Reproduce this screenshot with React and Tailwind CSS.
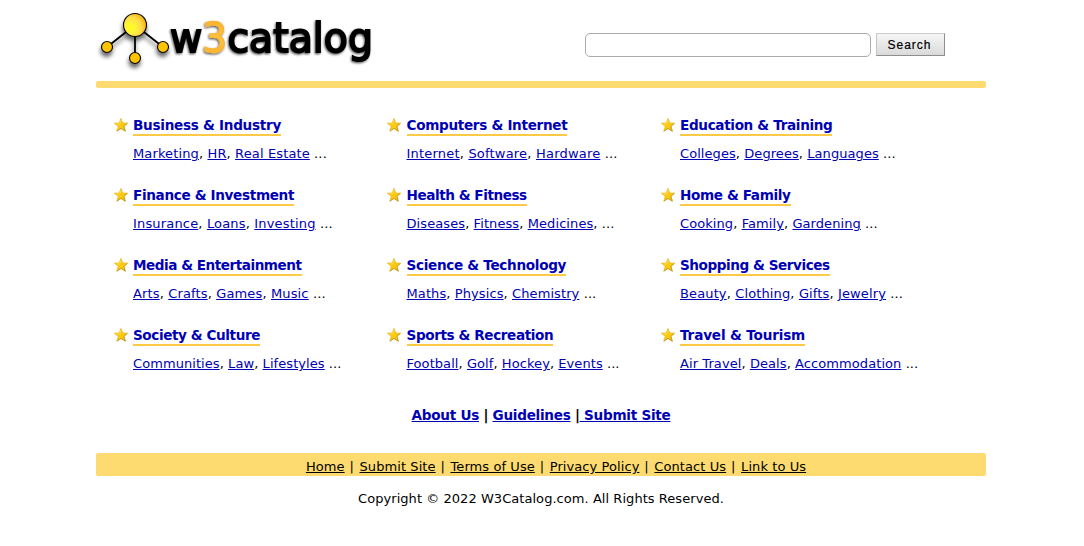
const categories = [
  { title: 'Business & Industry', links: ['Marketing', 'HR', 'Real Estate'], titleFit: 'tracking-[-0.29px]', linksFit: 'tracking-[0.13px]' },
  { title: 'Computers & Internet', links: ['Internet', 'Software', 'Hardware'], titleFit: 'tracking-[-0.32px]', linksFit: 'tracking-[0.2px]' },
  { title: 'Education & Training', links: ['Colleges', 'Degrees', 'Languages'], titleFit: 'tracking-[-0.35px]', linksFit: 'tracking-[0.07px]' },
  { title: 'Finance & Investment', links: ['Insurance', 'Loans', 'Investing'], titleFit: 'tracking-[-0.35px]', linksFit: 'tracking-[0.17px]' },
  { title: 'Health & Fitness', links: ['Diseases', 'Fitness', 'Medicines'], trailingComma: true, titleFit: 'tracking-[-0.45px]', linksFit: 'tracking-[0.09px]' },
  { title: 'Home & Family', links: ['Cooking', 'Family', 'Gardening'], titleFit: 'tracking-[-0.38px]', linksFit: 'tracking-[0.08px]' },
  { title: 'Media & Entertainment', links: ['Arts', 'Crafts', 'Games', 'Music'], titleFit: 'tracking-[-0.48px]', linksFit: 'tracking-[0.14px]' },
  { title: 'Science & Technology', links: ['Maths', 'Physics', 'Chemistry'], titleFit: 'tracking-[-0.32px]', linksFit: 'tracking-[0.1px]' },
  { title: 'Shopping & Services', links: ['Beauty', 'Clothing', 'Gifts', 'Jewelry'], titleFit: 'tracking-[-0.45px]', linksFit: 'tracking-[0.13px]' },
  { title: 'Society & Culture', links: ['Communities', 'Law', 'Lifestyles'], titleFit: 'tracking-[-0.42px]', linksFit: 'tracking-[0.07px]' },
  { title: 'Sports & Recreation', links: ['Football', 'Golf', 'Hockey', 'Events'], titleFit: 'tracking-[-0.41px]', linksFit: 'tracking-[0.07px]' },
  { title: 'Travel & Tourism', links: ['Air Travel', 'Deals', 'Accommodation'], titleFit: 'tracking-[-0.17px]', linksFit: 'tracking-[0.08px]' },
];

const footerLinks = ['Home', 'Submit Site', 'Terms of Use', 'Privacy Policy', 'Contact Us', 'Link to Us'];

function Logo() {
  return (
    <svg width="284" height="74" viewBox="0 0 284 74" role="img" aria-label="w3catalog">
      <defs>
        <radialGradient id="hub" cx="30%" cy="62%" r="75%">
          <stop offset="0" stopColor="#ffff20" />
          <stop offset="0.35" stopColor="#fff03c" />
          <stop offset="0.65" stopColor="#ffd94a" />
          <stop offset="1" stopColor="#f5a500" />
        </radialGradient>
        <linearGradient id="three" x1="0" y1="0" x2="0" y2="1">
          <stop offset="0" stopColor="#f6a92c" />
          <stop offset="0.5" stopColor="#ffc83f" />
          <stop offset="1" stopColor="#f3a72f" />
        </linearGradient>
        <filter id="shade" x="-20%" y="-20%" width="140%" height="160%">
          <feDropShadow dx="-0.5" dy="4" stdDeviation="2" floodColor="#000" floodOpacity="0.6" />
        </filter>
        <filter id="letterShade" x="-10%" y="-20%" width="120%" height="150%">
          <feDropShadow dx="-0.8" dy="1.2" stdDeviation="1" floodColor="#000" floodOpacity="0.7" />
        </filter>
      </defs>
      <g filter="url(#shade)" stroke="#000" strokeWidth="1.1">
        <path d="M39 25 11 47M39 25v33M39 25l28 22" strokeWidth="1.8" />
        <circle cx="39" cy="25" r="11.5" fill="url(#hub)" />
        <circle cx="11" cy="47" r="5.5" fill="#ffc400" />
        <circle cx="39" cy="58" r="5.5" fill="#ffc400" />
        <circle cx="67" cy="47" r="5.5" fill="#ffc400" />
      </g>
      <text
        x="74"
        y="52"
        fontSize="41"
        textLength="203"
        lengthAdjust="spacingAndGlyphs"
        filter="url(#letterShade)"
        fill="#050505"
        stroke="#050505"
        strokeWidth="1.9"
        className="font-['DejaVu_Sans',sans-serif]"
      >
        w<tspan fill="url(#three)" stroke="#f9b535" strokeWidth="1.5">3</tspan>catalog
      </text>
    </svg>
  );
}

function Star() {
  return (
    <svg className="mt-[9px] -ml-[0.5px] shrink-0" width="16" height="16" viewBox="0 0 16 16" aria-hidden="true">
      <path
        d="M8 1.4 9.8 6 14.7 6.2 10.9 9.3 12.3 14.2 8 11.4 3.8 14.2 5.2 9.3 1.3 6.2 6.2 6Z"
        fill="#fbc90d"
        stroke="#e9b51d"
        strokeWidth="0.7"
      />
      <path d="M8 3.3 6.8 7 3.6 7" stroke="#ffe45a" strokeWidth="0.8" fill="none" />
      <path d="M14.3 6.5 10.9 9.3 12.3 14.2 8 11.4 3.8 14.2" stroke="#b38c22" strokeWidth="0.7" fill="none" />
    </svg>
  );
}

function Category({ title, links, trailingComma, titleFit, linksFit }) {
  return (
    <section className="flex h-[70px] gap-[4.5px]">
      <Star />
      <div className="whitespace-nowrap">
        <h2 className="flex h-[28px] pt-[6px]">
          <a href="#" className={`h-[22px] border-b-2 border-[#fdca45] pt-px text-[13.6px] leading-[20px] font-bold text-[#0000b5] ${titleFit}`}>
            {title}
          </a>
        </h2>
        <p className={`pt-[8px] text-[13px] leading-[20px] ${linksFit}`}>
          {links.map((link, i) => (
            <span key={link}>
              {i > 0 && ', '}
              <a href="#" className="text-[#0000b5] underline">{link}</a>
            </span>
          ))}
          {trailingComma ? ', ...' : ' ...'}
        </p>
      </div>
    </section>
  );
}

export default function App() {
  return (
    <div className="h-[546px] overflow-hidden bg-white font-['DejaVu_Sans',sans-serif] text-black">
      <div className="ml-[96px] w-[890px]">
        <header className="flex h-[81px]">
          <Logo />
          <form className="mt-[33px] ml-[205px] flex gap-[5px]" onSubmit={(e) => e.preventDefault()}>
            <input aria-label="Search" className="h-[24px] w-[286px] rounded-[5px] border border-[#aaaaaf] px-2 outline-none" />
            <button className="h-[23px] w-[69px] border border-t-[#cccccc] border-r-[#8e8e8e] border-b-[#8e8e8e] border-l-[#c5c5c5] bg-linear-to-b from-[#f6f6f6] to-[#dadada] pt-px pr-[2px] font-['Liberation_Sans',sans-serif] text-[12px] leading-[20px] font-normal tracking-[1px] text-black [-webkit-text-stroke:0.2px_black]">
              Search
            </button>
          </form>
        </header>
        <div className="h-[7px] rounded-[2px] bg-[#fedb70]" />
        <main className="grid grid-cols-[273.5px_273.5px_273.5px] pt-[20px] pl-[17px]">
          {categories.map((c) => (
            <Category key={c.title} {...c} />
          ))}
        </main>
        <nav className="flex h-[65px] justify-center pt-[17px] text-[13.6px] leading-[20px] font-bold tracking-[-0.28px] whitespace-pre">
          <a href="#" className="text-[#0000b5] underline">About Us</a>
          <span> | </span>
          <a href="#" className="text-[#0000b5] underline">Guidelines</a>
          <span> |</span>
          <a href="#" className="text-[#0000b5] underline"> Submit Site</a>
        </nav>
        <nav className="flex h-[23px] justify-center rounded-[2px] bg-[#fedb70] pt-[4px] pl-[30px] text-[13px] leading-[20px] tracking-[0.08px] whitespace-pre">
          {footerLinks.map((link, i) => (
            <span key={link}>
              {i > 0 && <span className="tracking-[0.75px]"> | </span>}
              <a href="#" className="underline">{link}</a>
            </span>
          ))}
        </nav>
        <p className="pt-[13px] text-center text-[13px] leading-[20px] tracking-[0.05px]">
          Copyright © 2022 W3Catalog.com. All Rights Reserved.
        </p>
      </div>
    </div>
  );
}
